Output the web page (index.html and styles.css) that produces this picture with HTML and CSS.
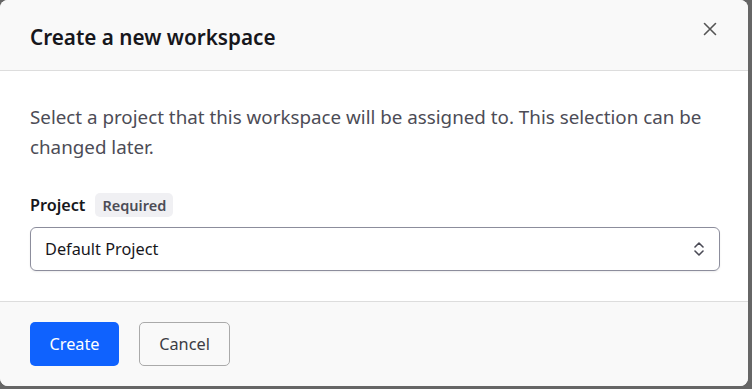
FILE: index.html
```html
<!DOCTYPE html>
<html lang="en">
<head>
    <meta charset="UTF-8">
    <title>Create a new workspace</title>
    <link rel="stylesheet" href="styles.css">
</head>
<body>
    <div class="dialog">
        <div class="dialog-header">
            <h2 class="dialog-title">Create a new workspace</h2>
            <button class="close-btn" aria-label="Close">
                <svg width="14" height="14" viewBox="0 0 14 14">
                    <path d="M1.5 1.5 L12.5 12.5 M12.5 1.5 L1.5 12.5" stroke="#555" stroke-width="1.6" fill="none" stroke-linecap="round"/>
                </svg>
            </button>
        </div>

        <div class="dialog-body">
            <p class="description">
                Select a project that this workspace will be assigned to. This selection can be changed later.
            </p>

            <div class="field-label">
                <label for="project">Project</label>
                <span class="badge">Required</span>
            </div>
            <div class="select-box">
                <span>Default Project</span>
                <svg width="12" height="16" viewBox="0 0 12 16">
                    <path d="M2 6 L6 2 L10 6 M2 10 L6 14 L10 10" stroke="#4a4a55" stroke-width="1.6" fill="none" stroke-linecap="round" stroke-linejoin="round"/>
                </svg>
            </div>
        </div>

        <div class="dialog-footer">
            <button class="btn btn-primary">Create</button>
            <button class="btn btn-secondary">Cancel</button>
        </div>
    </div>
</body>
</html>
```

FILE: styles.css
```css
body {
    margin: 0;
    background-color: #666666;
    font-family: "Noto Sans", "Open Sans", sans-serif;
    color: #1d1d22;
}

.dialog {
    width: 748px;
    height: 386px;
    background-color: #ffffff;
    border-radius: 8px;
    overflow: hidden;
    display: flex;
    flex-direction: column;
}

.dialog-header {
    height: 70px;
    padding: 0 30px;
    background-color: #f9f9f9;
    border-bottom: 1px solid #dddddd;
    display: flex;
    align-items: center;
    justify-content: space-between;
}

.dialog-title {
    margin: 0;
    margin-top: 3px;
    font-size: 20.7px;
    font-weight: 600;
    color: #17171c;
}

.close-btn {
    background: none;
    border: none;
    padding: 0;
    margin-right: 1px;
    margin-top: -12px;
    cursor: pointer;
    display: flex;
}

.dialog-body {
    flex: 1;
    padding: 31px 28px 0 30px;
}

.description {
    margin: 0 0 31px;
    font-size: 18.8px;
    line-height: 30px;
    color: #4c4c56;
}

.field-label {
    display: flex;
    align-items: center;
    gap: 10px;
    margin-bottom: 10px;
}

.field-label label {
    font-size: 16.2px;
    font-weight: 600;
    color: #17171c;
}

.badge {
    background-color: #f0f0f3;
    color: #4c4c56;
    font-size: 14.5px;
    font-weight: 600;
    padding: 0 7px;
    height: 24px;
    line-height: 24px;
    border-radius: 5px;
}

.select-box {
    height: 42px;
    border: 1px solid #8c8d9c;
    border-radius: 6px;
    box-shadow: 0 1px 2px rgba(0, 0, 0, 0.08);
    padding: 0 14px 0 14px;
    display: flex;
    align-items: center;
    justify-content: space-between;
    font-size: 16.3px;
    color: #17171c;
}

.dialog-footer {
    height: 84px;
    background-color: #f9f9f9;
    border-top: 1px solid #dddddd;
    padding: 0 30px;
    display: flex;
    align-items: center;
    gap: 20px;
}

.btn {
    height: 44px;
    font-family: inherit;
    font-size: 16.3px;
    border-radius: 5px;
    padding: 0;
    cursor: pointer;
}

.btn-primary {
    background-color: #0f62fe;
    color: #ffffff;
    border: none;
    width: 89px;
}

.btn-secondary {
    background-color: #f9f9f9;
    color: #3c3c44;
    border: 1px solid #aaaaaa;
    width: 91px;
}
```
